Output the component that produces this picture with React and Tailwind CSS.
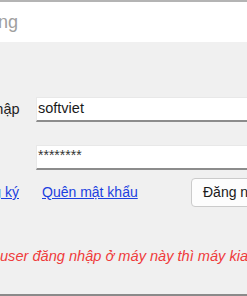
export default function App() {
    return (
        <div className="w-[247px] h-[296px] overflow-hidden flex flex-col bg-[#f0f0f0] font-['Liberation_Sans',Arial,sans-serif]">
            {/* Title bar */}
            <div className="h-[42px] shrink-0 bg-white border-t-2 border-[#b4b4b4] flex items-center">
                <div className="w-[18px] flex justify-end">
                    <span className="whitespace-nowrap shrink-0 text-[18px] text-[#a0a0a0]">Đăng nhập hệ thống</span>
                </div>
            </div>

            {/* Form */}
            <div className="flex-1 flex flex-col pt-[55px]">
                <div className="flex items-center h-[25px]">
                    <div className="-ml-[78px] w-[98px] shrink-0 whitespace-nowrap text-[14.5px] text-[#222]">Tên đăng nhập</div>
                    <div className="ml-[16px] w-[260px] shrink-0 h-[25px] bg-white border border-[#e8e8e8] border-b-2 border-b-[#8c8c8c] flex items-center pl-[1px]">
                        <span className="text-[14.5px] text-[#1a1a1a]">softviet</span>
                    </div>
                </div>

                <div className="flex items-center h-[25px] mt-[23px]">
                    <div className="-ml-[78px] w-[98px] shrink-0 whitespace-nowrap text-[14.5px] text-[#222]">Mật khẩu</div>
                    <div className="ml-[16px] w-[260px] shrink-0 h-[25px] bg-white border border-[#e8e8e8] border-b-2 border-b-[#8c8c8c] flex items-center pl-[1px]">
                        <span className="text-[14px] text-[#333] pb-[4px]">********</span>
                    </div>
                </div>

                <div className="flex items-center h-[29px] mt-[8px]">
                    <div className="w-[19px] shrink-0 flex justify-end">
                        <a className="whitespace-nowrap shrink-0 text-[14px] text-[#1b3fe0] underline">Đăng ký</a>
                    </div>
                    <a className="ml-[23px] whitespace-nowrap text-[14px] text-[#1b3fe0] underline">Quên mật khẩu</a>
                    <button className="ml-auto -mr-[40px] w-[96px] shrink-0 h-[29px] bg-[#fdfdfd] border border-[#cbcbcb] rounded-[4px] text-left pl-[11px] text-[14px] text-[#1a1a1a]">
                        Đăng nhập
                    </button>
                </div>

                <div className="mt-[40px] h-[20px] flex items-center">
                    <span className="whitespace-nowrap text-[14.6px] italic text-[#ef3b3b]">
                        user đăng nhập ở máy này thì máy kia sẽ bị thoát
                    </span>
                </div>
            </div>

            <div className="h-[2px] shrink-0 bg-[#8a8a8a]" />
        </div>
    );
}
